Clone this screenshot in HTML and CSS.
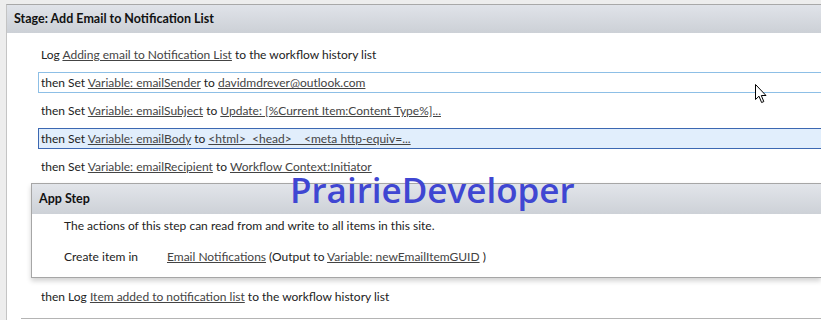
FILE: index.html
```html
<!DOCTYPE html>
<html lang="en">
<head>
    <meta charset="UTF-8">
    <title>Workflow Stage</title>
    <link rel="stylesheet" href="styles.css">
</head>
<body>

    <div class="stage">
        <div class="stage-head">Stage: Add Email to Notification List</div>
        <div class="stage-body">
            <div class="action">Log <a>Adding email to Notification List</a> to the workflow history list</div>
            <div class="action hover">then Set <a>Variable: emailSender</a> to <a>davidmdrever@outlook.com</a></div>
            <div class="action">then Set <a>Variable: emailSubject</a> to <a>Update: [%Current Item:Content Type%]...</a></div>
            <div class="action selected">then Set <a>Variable: emailBody</a> to <a>&lt;html&gt; &nbsp;&lt;head&gt; &nbsp;&nbsp; &lt;meta http-equiv=...</a></div>
            <div class="action">then Set <a>Variable: emailRecipient</a> to <a>Workflow Context:Initiator</a></div>

            <div class="app-step">
                <div class="app-head">App Step</div>
                <div class="app-body">
                    <div class="app-note">The actions of this step can read from and write to all items in this site.</div>
                    <div class="app-action">
                        <span class="verb">Create item in</span>
                        <span><a>Email Notifications</a> (Output to <a>Variable: newEmailItemGUID</a> )</span>
                    </div>
                </div>
            </div>

            <div class="action">then Log <a>Item added to notification list</a> to the workflow history list</div>
            <div class="stage-end"></div>
        </div>
    </div>

    <div class="watermark">PrairieDeveloper</div>

    <svg class="cursor" width="13" height="20" viewBox="0 0 13 20">
        <path d="M0.5 0.5 L0.5 15.5 L4 12.2 L6.6 18.5 L8.8 17.6 L6.3 11.5 L11 11.5 Z" fill="#fff" stroke="#000" stroke-width="1"/>
    </svg>

</body>
</html>
```

FILE: styles.css
```css
body {
    margin: 0;
    background-color: #ededed;
    font-family: Lato, 'Noto Sans', sans-serif;
    font-size: 12px;
    color: #222;
    overflow: hidden;
    height: 320px;
}

a {
    color: #444;
    text-decoration: underline;
}

.stage {
    margin: 4px 0 0 6px;
    background: #fff;
    border-left: 1px solid #c4c4c4;
    border-top: 1px solid #a8a8a8;
    height: 316px;
}

.stage-head {
    height: 28px;
    line-height: 28px;
    padding-left: 7px;
    font-weight: bold;
    font-size: 12.5px;
    color: #111;
    background: linear-gradient(#e0e3e9, #ccd0d6);
}

.stage-body {
    padding: 11px 0 0 24px;
}

.action {
    margin-left: 7px;
    padding-left: 2px;
    height: 19px;
    line-height: 19px;
    margin-bottom: 7px;
    border: 1px solid transparent;
    border-right: none;
}

.action.hover {
    border-color: #8dbfe6;
}

.action.selected {
    background: #e1eefc;
    border-color: #3c68b2;
}

.app-step {
    margin: -1px 0 8px;
    border: 1px solid #a6a6a6;
    border-right: none;
    box-shadow: 0 3px 5px rgba(0, 0, 0, 0.18);
}

.app-head {
    height: 30px;
    line-height: 30px;
    padding-left: 7px;
    font-weight: bold;
    font-size: 12.5px;
    color: #111;
    background: linear-gradient(#e2e5ea, #cdd1d7);
}

.app-body {
    padding: 0 0 1px 32px;
}

.app-note {
    height: 24px;
    line-height: 24px;
}

.app-action {
    display: flex;
    height: 38px;
    line-height: 38px;
}

.verb {
    width: 103px;
}

.stage-end {
    margin: 11px 0 0 -10px;
    border-top: 1px solid #b4b4b4;
}

.watermark {
    position: absolute;
    left: 290px;
    top: 166px;
    font-family: 'Open Sans', sans-serif;
    font-weight: 600;
    font-size: 35px;
    color: #3f46d2;
}

.cursor {
    position: absolute;
    left: 755px;
    top: 84px;
}
```
